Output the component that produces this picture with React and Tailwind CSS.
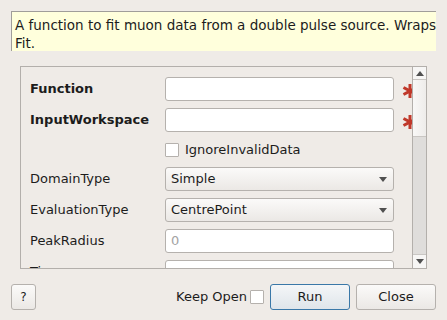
import React from 'react';

const Asterisk = () => (
  <svg width="16" height="16" viewBox="0 0 16 16" className="shrink-0 ml-[8px] mt-[3px]">
    <g stroke="#c0392b" strokeWidth="3" strokeLinecap="butt">
      <line x1="8" y1="1" x2="8" y2="15" />
      <line x1="1.5" y1="4.5" x2="14.5" y2="11.5" />
      <line x1="1.5" y1="11.5" x2="14.5" y2="4.5" />
    </g>
  </svg>
);

const Arrow = ({ up }) => (
  <svg width="8" height="5" viewBox="0 0 8 5">
    <polygon points={up ? '0,5 8,5 4,0' : '0,0 8,0 4,5'} fill="#505050" />
  </svg>
);

const TextInput = ({ value }) => (
  <div className="w-[229px] h-[24px] shrink-0 bg-white border border-[#b5b1ad] rounded-[3px] flex items-center px-[5px] text-[#a3a3a3]">
    {value}
  </div>
);

const Combo = ({ value }) => (
  <div className="w-[229px] h-[24px] shrink-0 bg-gradient-to-b from-[#fbfaf9] to-[#ebe8e5] border border-[#b5b1ad] rounded-[3px] flex items-center justify-between pl-[5px] pr-[6px]">
    <span>{value}</span>
    <Arrow />
  </div>
);

const Row = ({ label, bold, children }) => (
  <div className="flex items-center h-[24px] shrink-0">
    <div className={`w-[135px] shrink-0 ${bold ? 'font-bold' : ''}`}>{label}</div>
    {children}
  </div>
);

export default function App() {
  return (
    <div className="w-[447px] h-[320px] bg-[#efebe7] p-[11px] flex flex-col font-['DejaVu_Sans',sans-serif] text-[13px] text-[#1c1c1c] overflow-hidden">
      {/* description */}
      <div className="h-[40px] shrink-0 bg-[#ffffdc] border-t border-l border-[#a09d9a] pl-[3px] pt-[4px] text-[13.5px] leading-[18px] whitespace-nowrap">
        A function to fit muon data from a double pulse source. Wraps
        <br />
        Fit.
      </div>

      {/* properties */}
      <div className="mt-[15px] mx-[9px] h-[203px] shrink-0 border border-[#b3afab] flex">
        <div className="flex-1 overflow-hidden pt-[10px] pl-[9px] flex flex-col gap-[7px]">
          <Row label="Function" bold>
            <TextInput />
            <Asterisk />
          </Row>
          <Row label="InputWorkspace" bold>
            <TextInput />
            <Asterisk />
          </Row>
          <div className="flex items-center h-[21px] shrink-0 pl-[135px] gap-[6px]">
            <div className="w-[14px] h-[14px] bg-white border border-[#b5b1ad] rounded-[1px]" />
            <span>IgnoreInvalidData</span>
          </div>
          <Row label="DomainType">
            <Combo value="Simple" />
          </Row>
          <Row label="EvaluationType">
            <Combo value="CentrePoint" />
          </Row>
          <Row label="PeakRadius">
            <TextInput value="0" />
          </Row>
          <Row label="Ties">
            <TextInput />
          </Row>
        </div>
        <div className="w-[14px] shrink-0 border-l border-[#b3afab] flex flex-col bg-[#dfdddb]">
          <div className="h-[13px] bg-[#f7f6f5] flex items-center justify-center border-b border-[#c9c6c3]">
            <Arrow up />
          </div>
          <div className="h-[57px] bg-gradient-to-r from-[#f9f8f7] to-[#eeecea] border-b border-[#c9c6c3]" />
          <div className="flex-1" />
          <div className="h-[14px] bg-[#f7f6f5] flex items-center justify-center border-t border-[#c9c6c3]">
            <Arrow />
          </div>
        </div>
      </div>

      {/* buttons */}
      <div className="mt-[15px] h-[26px] flex items-center shrink-0">
        <button className="w-[25px] h-[26px] bg-gradient-to-b from-[#fbfaf9] to-[#ebe8e5] border border-[#b5b1ad] rounded-[3px] text-[12px]">
          ?
        </button>
        <span className="ml-auto">Keep Open</span>
        <div className="ml-[3px] w-[14px] h-[14px] bg-white border border-[#b5b1ad] rounded-[1px]" />
        <button className="ml-[6px] w-[80px] h-[26px] bg-gradient-to-b from-[#f4f6f8] to-[#dfe5ea] border border-[#3a78a8] rounded-[3px]">
          Run
        </button>
        <button className="ml-[6px] w-[80px] h-[26px] bg-gradient-to-b from-[#fbfaf9] to-[#ebe8e5] border border-[#b5b1ad] rounded-[3px]">
          Close
        </button>
      </div>
    </div>
  );
}
